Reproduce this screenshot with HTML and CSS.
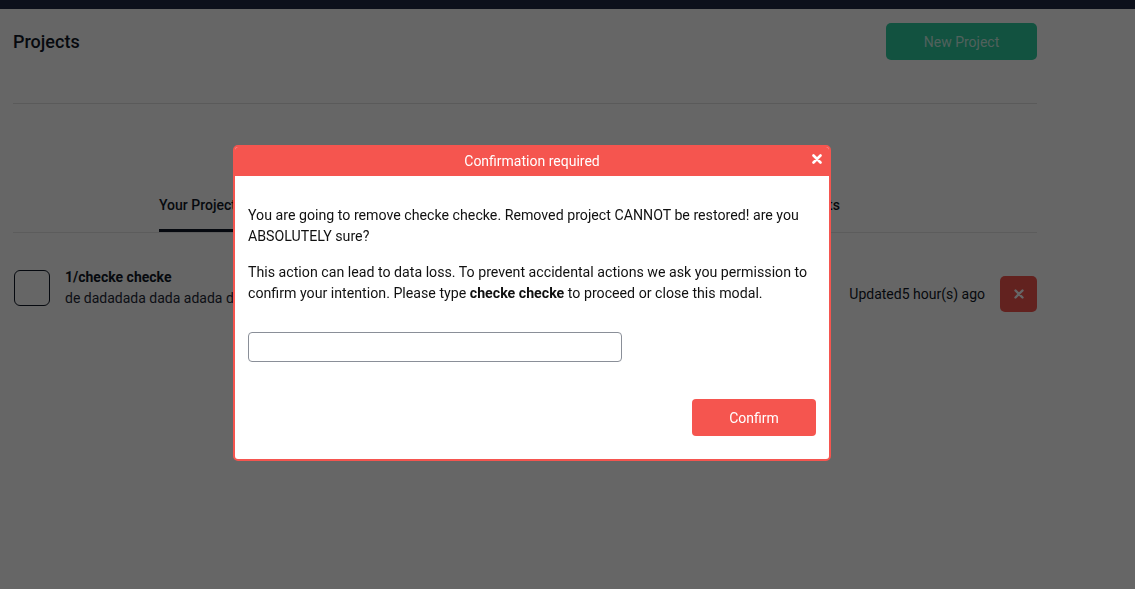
FILE: index.html
```html
<!DOCTYPE html>
<html lang="en">
<head>
<meta charset="utf-8">
<title>Projects</title>
<link rel="stylesheet" href="styles.css">
</head>
<body>
<div class="topbar"></div>
<main class="page">
  <header class="page-header">
    <h1 class="page-title">Projects</h1>
    <button class="btn-new">New Project</button>
  </header>

  <nav class="tabs">
    <a class="tab tab-active">Your Projects</a>
    <a class="tab">Starred Projects</a>
    <a class="tab">Shared Projects</a>
  </nav>

  <div class="project-row">
    <div class="project-main">
      <div class="checkbox"></div>
      <div class="project-text">
        <div class="project-name">1/checke checke</div>
        <div class="project-desc">de dadadada dada adada dadada dada</div>
      </div>
    </div>
    <div class="project-side">
      <span class="updated">Updated5 hour(s) ago</span>
      <button class="btn-delete" aria-label="Delete">
        <svg width="10" height="10" viewBox="0 0 10 10"><path d="M1.5 1.5 L8.5 8.5 M8.5 1.5 L1.5 8.5" stroke="#fff" stroke-width="2.4" stroke-linecap="round"/></svg>
      </button>
    </div>
  </div>
</main>

<div class="overlay">
  <div class="modal">
    <div class="modal-header">
      <span class="modal-title">Confirmation required</span>
      <button class="modal-close" aria-label="Close">
        <svg width="10" height="10" viewBox="0 0 10 10"><path d="M1.5 1.5 L8.5 8.5 M8.5 1.5 L1.5 8.5" stroke="#fff" stroke-width="2.6" stroke-linecap="round"/></svg>
      </button>
    </div>
    <div class="modal-body">
      <p class="msg">You are going to remove checke checke. Removed project CANNOT be restored! are you ABSOLUTELY sure?</p>
      <p class="msg msg-last">This action can lead to data loss. To prevent accidental actions we ask you permission to confirm your intention. Please type <strong>checke checke</strong> to proceed or close this modal.</p>
      <input class="confirm-input" type="text">
      <div class="modal-actions">
        <button class="btn-confirm">Confirm</button>
      </div>
    </div>
  </div>
</div>
</body>
</html>
```

FILE: styles.css
```css
* { box-sizing: border-box; }

html, body {
  margin: 0;
  padding: 0;
  background: #ffffff;
  font-family: Roboto, "Liberation Sans", sans-serif;
  font-size: 14px;
  color: #111827;
}

.topbar {
  height: 9px;
  background: #1f2a44;
}

.page {
  width: 1024px;
  margin-left: 13px;
}

.page-header {
  display: flex;
  justify-content: space-between;
  align-items: center;
  padding: 14px 0 43px;
  border-bottom: 1px solid #e2e2e2;
}

.page-title {
  margin: 0;
  font-size: 18px;
  font-weight: 500;
  color: #111827;
}

.btn-new {
  width: 151px;
  height: 37px;
  border: 0;
  border-radius: 5px;
  background: #2dcca0;
  color: rgba(255, 255, 255, 0.75);
  font-family: Roboto, "Liberation Sans", sans-serif;
  font-size: 14px;
}

.tabs {
  display: flex;
  justify-content: space-between;
  margin-top: 91px;
  padding: 0 197px 0 146px;
  border-bottom: 1px solid #e6e6e6;
}

.tab {
  font-size: 14px;
  font-weight: 500;
  line-height: 21px;
  padding-bottom: 13px;
  border-bottom: 3px solid transparent;
  color: #111827;
}

.tab-active {
  border-bottom-color: #111827;
}

.project-row {
  display: flex;
  justify-content: space-between;
  align-items: flex-start;
  padding-top: 34px;
}

.project-main {
  display: flex;
  align-items: center;
  gap: 15px;
  margin-left: 1px;
}

.checkbox {
  width: 36px;
  height: 36px;
  border: 1.5px solid #111827;
  border-radius: 6px;
  background: #ffffff;
}

.project-text {
  line-height: 21px;
}

.project-name {
  font-weight: 700;
  color: #111827;
}

.project-desc {
  color: #1f2937;
}

.project-side {
  display: flex;
  align-items: center;
  gap: 15px;
  margin-top: 9px;
}

.updated {
  color: #111827;
}

.btn-delete {
  width: 37px;
  height: 36px;
  border: 0;
  border-radius: 5px;
  background: #f5554f;
  display: flex;
  align-items: center;
  justify-content: center;
  padding: 0;
}

.overlay {
  position: fixed;
  inset: 0;
  background: rgba(0, 0, 0, 0.6);
  padding: 145px 0 0 233px;
}

.modal {
  width: 598px;
  background: #ffffff;
  border: 2px solid #f5554f;
  border-radius: 5px;
  overflow: hidden;
  position: relative;
}

.modal-header {
  height: 29px;
  background: #f5554f;
  display: flex;
  align-items: center;
  justify-content: center;
}

.modal-title {
  color: #ffffff;
  font-size: 14px;
  line-height: 29px;
}

.modal-close {
  position: absolute;
  top: 6px;
  right: 6px;
  width: 12px;
  height: 12px;
  padding: 0;
  border: 0;
  background: transparent;
  display: flex;
  align-items: center;
  justify-content: center;
}

.modal-body {
  padding: 29px 13px 23px 13px;
}

.msg {
  margin: 0 0 15px;
  line-height: 21px;
  color: #111111;
  font-size: 14.2px;
}

.msg strong { font-weight: 700; }

.msg-last {
  margin-bottom: 28px;
}

.confirm-input {
  display: block;
  width: 374px;
  height: 30px;
  border: 1px solid #8a8f98;
  border-radius: 4px;
  background: #ffffff;
}

.modal-actions {
  display: flex;
  justify-content: flex-end;
  margin-top: 37px;
}

.btn-confirm {
  width: 124px;
  height: 37px;
  border: 0;
  border-radius: 4px;
  background: #f5554f;
  color: #ffffff;
  font-family: Roboto, "Liberation Sans", sans-serif;
  font-size: 14px;
}
```
